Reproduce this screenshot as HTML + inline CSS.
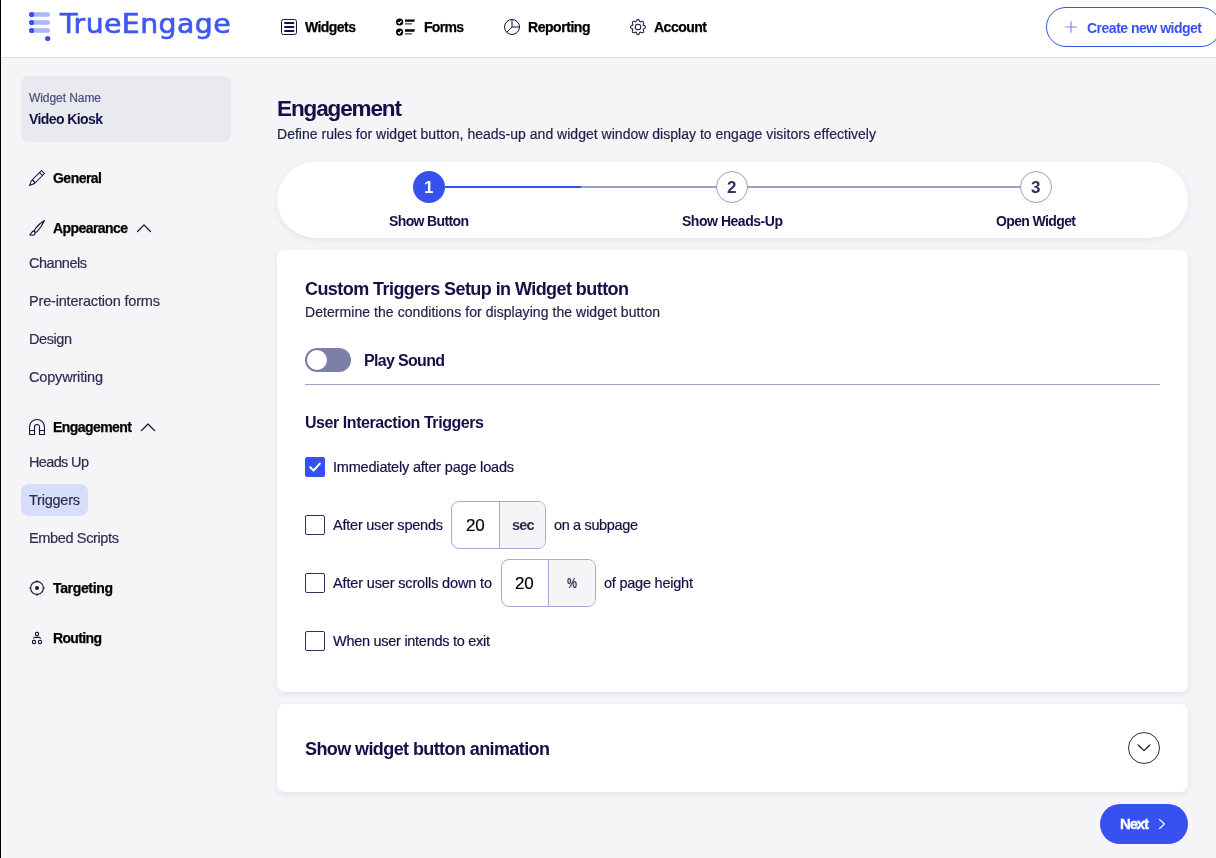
<!DOCTYPE html>
<html lang="en">
<head>
<meta charset="utf-8">
<title>TrueEngage - Engagement Triggers</title>
<style>
*{box-sizing:border-box;margin:0;padding:0}
html,body{width:1216px;height:858px;overflow:hidden;background:#f5f5f8;font-family:"Liberation Sans",sans-serif;color:#14143c}
body{position:relative}
.abs{position:absolute;white-space:nowrap}
.t{position:absolute;white-space:nowrap;line-height:20px;height:20px;will-change:transform}
#edge{left:0;top:0;width:1px;height:858px;background:#000}
#hdr{left:1px;top:0;width:1215px;height:58px;background:#fff;border-bottom:1px solid #dcdcde}
.card{position:absolute;background:#fff;border-radius:8px;box-shadow:0 2px 6px rgba(40,40,100,.09)}
.cb{position:absolute;width:20px;height:20px;border:1px solid #30325a;border-radius:2px;background:#fff}
.ig{position:absolute;width:95px;height:48px;border:1px solid #a8abd0;border-radius:8px;background:#fff;overflow:hidden}
.ig i{position:absolute;left:47px;top:0;width:47px;height:46px;background:#f5f5f8;border-left:1px solid #a8abd0}
svg{position:absolute;overflow:visible}
</style>
</head>
<body>
<div class="abs" id="hdr"></div>
<div class="abs" id="edge"></div>

<!-- logo -->
<svg style="left:28px;top:11px" width="24" height="32" viewBox="0 0 24 32">
  <rect x="1" y="1.2" width="21" height="4.6" rx="2.3" fill="#aab4f7"/>
  <rect x="1" y="9.2" width="21" height="4.6" rx="2.3" fill="#aab4f7"/>
  <rect x="1" y="17.2" width="21" height="4.6" rx="2.3" fill="#aab4f7"/>
  <circle cx="3.6" cy="3.5" r="2.6" fill="#3651f0"/>
  <circle cx="3.6" cy="11.5" r="2.6" fill="#3651f0"/>
  <circle cx="3.6" cy="19.5" r="2.6" fill="#3651f0"/>
  <circle cx="19.7" cy="27.5" r="2.6" fill="#3651f0"/>
</svg>
<div class="abs" id="logo" style="left:59.500px;top:7.500px;font-family:'DejaVu Sans','Liberation Sans',sans-serif;font-size:26.600px;line-height:32px;color:#3d57f2;-webkit-text-stroke:0.650px #3d57f2;letter-spacing:0.400px;will-change:transform;transform:scaleX(1.065);transform-origin:0 0">TrueEngage</div>

<!-- nav icons -->
<svg style="left:281px;top:19px" width="16" height="16" viewBox="0 0 16 16" fill="none" stroke="#14143c"><rect x=".5" y=".5" width="15" height="15" rx="2"/><path d="M4 4H12.500M4 8H12.500M4 12H12.500" stroke-width="1.900" stroke-linecap="round"/></svg>
<svg style="left:395px;top:17px" width="22" height="20" viewBox="0 0 22 20"><circle cx="4.600" cy="5" r="3.600" fill="#000"/><circle cx="4.600" cy="15.100" r="3.600" fill="#000"/><path d="M2.900 5.100l1.300 1.300 2.300-2.600M2.900 15.200l1.300 1.300 2.300-2.600" stroke="#fff" stroke-width="1.200" fill="none"/><path d="M10 2.400h9.900l-.6 2.400H10zM10 12.300h9.900l-.6 2.400H10z" fill="#000"/><path d="M10 6.200h7.200l-.5 1.400H10zM10 16.200h7.200l-.5 1.400H10z" fill="#444"/></svg>
<svg style="left:504px;top:19px" width="16" height="16" viewBox="0 0 16 16" fill="none" stroke="#14143c"><circle cx="8" cy="8" r="7.500"/><path d="M8 .5V8H15.500M8 8L2.700 13.300"/></svg>
<svg style="left:630px;top:19px" width="16" height="16" viewBox="0 0 16 16" fill="#14143c"><path d="M8 4.754a3.246 3.246 0 1 0 0 6.492 3.246 3.246 0 0 0 0-6.492M5.754 8a2.246 2.246 0 1 1 4.492 0 2.246 2.246 0 0 1-4.492 0"/><path d="M9.796 1.343c-.527-1.790-3.065-1.790-3.592 0l-.094.319a.873.873 0 0 1-1.255.520l-.292-.160c-1.640-.892-3.433.902-2.540 2.541l.159.292a.873.873 0 0 1-.520 1.255l-.319.094c-1.790.527-1.790 3.065 0 3.592l.319.094a.873.873 0 0 1 .520 1.255l-.160.292c-.892 1.640.901 3.434 2.541 2.540l.292-.159a.873.873 0 0 1 1.255.520l.094.319c.527 1.790 3.065 1.790 3.592 0l.094-.319a.873.873 0 0 1 1.255-.520l.292.160c1.640.893 3.434-.902 2.540-2.541l-.159-.292a.873.873 0 0 1 .520-1.255l.319-.094c1.790-.527 1.790-3.065 0-3.592l-.319-.094a.873.873 0 0 1-.520-1.255l.160-.292c.893-1.640-.902-3.433-2.541-2.540l-.292.159a.873.873 0 0 1-1.255-.520zm-2.633.283c.246-.835 1.428-.835 1.674 0l.094.319a1.873 1.873 0 0 0 2.693 1.115l.291-.160c.764-.415 1.600.420 1.184 1.185l-.159.292a1.873 1.873 0 0 0 1.116 2.692l.318.094c.835.246.835 1.428 0 1.674l-.319.094a1.873 1.873 0 0 0-1.115 2.693l.160.291c.415.764-.420 1.600-1.185 1.184l-.291-.159a1.873 1.873 0 0 0-2.693 1.116l-.094.318c-.246.835-1.428.835-1.674 0l-.094-.319a1.873 1.873 0 0 0-2.692-1.115l-.292.160c-.764.415-1.600-.420-1.184-1.185l.159-.291A1.873 1.873 0 0 0 1.945 8.930l-.319-.094c-.835-.246-.835-1.428 0-1.674l.319-.094A1.873 1.873 0 0 0 3.060 4.377l-.160-.292c-.415-.764.420-1.600 1.185-1.184l.292.159a1.873 1.873 0 0 0 2.692-1.115z"/></svg>

<!-- sidebar icons -->
<svg style="left:29px;top:170px" width="16" height="16" viewBox="0 0 16 16" fill="#14143c"><path d="M12.146.146a.5.5 0 0 1 .708 0l3 3a.5.5 0 0 1 0 .708l-10 10a.5.5 0 0 1-.168.110l-5 2a.5.5 0 0 1-.650-.650l2-5a.5.5 0 0 1 .110-.168zM11.207 2.500 13.500 4.793 14.793 3.500 12.500 1.207zm1.586 3L10.500 3.207 4 9.707V10h.5a.5.5 0 0 1 .5.5v.5h.5a.5.5 0 0 1 .5.5v.5h.293zm-9.761 5.175-.106.106-1.528 3.821 3.821-1.528.106-.106A.5.5 0 0 1 5 12.500V12h-.5a.5.5 0 0 1-.5-.5V11h-.5a.5.5 0 0 1-.468-.325"/></svg>
<svg style="left:29px;top:220px" width="16" height="16" viewBox="0 0 16 16" fill="none" stroke="#14143c" stroke-width="1.150" stroke-linejoin="round"><path d="M15.400.600C12.500 2.400 8.600 5.800 6.600 8.300 5.900 9.200 5.400 10.500 5.200 11.300L6.200 12.400C7 12.200 8 11.600 8.700 10.800 10.900 8.500 13.900 4 15.400.600Z"/><path d="M5.300 11.500C4.600 11.100 3.600 11.200 3 12.100 2.300 13.100 2.100 13.900 1 14.500 .8 14.600.800 14.800 1 14.900 1.800 15.300 3.600 15.300 4.700 15 5.900 14.700 6.100 13.300 6.100 12.500"/></svg>
<svg style="left:29px;top:419px" width="16" height="16" viewBox="0 0 16 16" fill="none" stroke="#14143c" stroke-width="1.100" stroke-linejoin="round"><path d="M.550 15.450V8A7.450 7.450 0 0 1 15.450 8V15.450H10.500V8A2.500 2.500 0 0 0 5.500 8V15.450ZM.550 11.500H5.500M10.500 11.500H15.450"/></svg>
<svg style="left:29px;top:580px" width="16" height="16" viewBox="0 0 16 16" fill="none" stroke="#14143c"><circle cx="8" cy="8" r="6.400" stroke-width="1.100"/><circle cx="8" cy="8" r="2" fill="#14143c" stroke="none"/><path d="M8 .200V1.800M8 14.200V15.800M.200 8H1.800M14.200 8H15.800" stroke-width="1.100"/></svg>
<svg style="left:31px;top:631px" width="12" height="14" viewBox="0 0 12 14" fill="none" stroke="#14143c" stroke-width="1.100"><rect x="4.400" y="1.400" width="3.200" height="3.200" rx="1.300"/><rect x="1.400" y="9.400" width="3.200" height="3.200" rx="1.300"/><rect x="7.400" y="9.400" width="3.200" height="3.200" rx="1.300"/><path d="M2.600 7.600C2.600 6.600 3 6.400 4 6.400H8C9 6.400 9.400 6.600 9.600 7.600"/></svg>
<!-- chevrons -->
<svg style="left:136px;top:221px" width="16" height="14" viewBox="0 0 16 14" fill="none" stroke="#14143c" stroke-width="1.200" stroke-linecap="round" stroke-linejoin="round"><path d="M1.500 10.500L8 4l6.500 6.500"/></svg>
<svg style="left:140px;top:420px" width="16" height="14" viewBox="0 0 16 14" fill="none" stroke="#14143c" stroke-width="1.200" stroke-linecap="round" stroke-linejoin="round"><path d="M1.500 10.500L8 4l6.500 6.500"/></svg>

<!-- create button -->
<div class="abs" style="left:1046px;top:7px;width:175px;height:40px;border:1px solid #3651f0;border-radius:20px;background:#fff"></div>
<svg style="left:1065px;top:21px" width="12" height="12" viewBox="0 0 12 12"><path d="M6 .200v11.600M.200 6h11.600" stroke="#7686f5" stroke-width="1.150" fill="none"/></svg>

<!-- sidebar -->
<div class="abs" style="left:21px;top:76px;width:210px;height:66px;border-radius:8px;background:#e9e9f0"></div>
<div class="abs" style="left:21px;top:484px;width:67px;height:32px;border-radius:8px;background:#d6defc"></div>

<!-- stepper -->
<div class="abs" style="left:277px;top:162px;width:911px;height:76px;border-radius:38px;background:#fff;box-shadow:0 2px 6px rgba(40,40,100,.09)"></div>
<div class="abs" style="left:444px;top:186px;width:576px;height:2px;background:#9da0c0"></div>
<div class="abs" style="left:444px;top:186px;width:137px;height:2px;background:#3651f0"></div>
<div class="abs" style="left:412.5px;top:171px;width:32px;height:32px;border-radius:50%;background:#3651f0"></div>
<div class="abs" style="left:716px;top:171px;width:32px;height:32px;border-radius:50%;background:#fff;border:1px solid #9da0c0"></div>
<div class="abs" style="left:1019.5px;top:171px;width:32px;height:32px;border-radius:50%;background:#fff;border:1px solid #9da0c0"></div>

<!-- cards -->
<div class="card" style="left:277px;top:250px;width:911px;height:442px"></div>
<div class="card" style="left:277px;top:704px;width:911px;height:88px"></div>

<!-- toggle -->
<div class="abs" style="left:305px;top:348px;width:46px;height:24px;border-radius:12px;background:#7d80a6"></div>
<div class="abs" style="left:307px;top:350px;width:20px;height:20px;border-radius:50%;background:#fff"></div>
<div class="abs" style="left:305px;top:384px;width:855px;height:1px;background:#9da0c0"></div>

<!-- checkboxes -->
<div class="cb" style="left:305px;top:457px;background:#3651f0;border-color:#3651f0"></div>
<svg style="left:305px;top:457px" width="20" height="20" viewBox="0 0 20 20"><path d="M5.200 10.200l3.300 3.300L14.800 6.600" stroke="#fff" stroke-width="2" fill="none" stroke-linecap="round" stroke-linejoin="round"/></svg>
<div class="cb" style="left:305px;top:515px"></div>
<div class="cb" style="left:305px;top:573px"></div>
<div class="cb" style="left:305px;top:631px"></div>

<div class="ig" style="left:451px;top:501px"><i></i></div>
<div class="ig" style="left:501px;top:559px"><i style="left:46px;width:48px"></i></div>

<!-- accordion circle -->
<div class="abs" style="left:1128px;top:732px;width:32px;height:32px;border-radius:50%;border:1px solid #2a2a50"></div>
<svg style="left:1136px;top:740px" width="16" height="16" viewBox="0 0 16 16"><path d="M2.2 5l5.8 5.6L13.8 5" stroke="#14143c" stroke-width="1.2" fill="none" stroke-linecap="round" stroke-linejoin="round"/></svg>

<!-- next -->
<div class="abs" style="left:1100px;top:804px;width:88px;height:40px;border-radius:20px;background:#3651f0"></div>
<svg style="left:1156px;top:817px" width="12" height="14" viewBox="0 0 12 14"><path d="M3.500 2.500L8.500 7l-5 4.500" stroke="#fff" stroke-width="1.050" fill="none" stroke-linecap="round" stroke-linejoin="round"/></svg>

<!-- text -->
<span class="t" id="n1" style="left:305px;top:17px;font-size:14px;font-weight:700;color:#000;letter-spacing:-0.555px;-webkit-text-stroke:0.25px #000">Widgets</span>
<span class="t" id="n2" style="left:424px;top:17px;font-size:14px;font-weight:700;color:#000;letter-spacing:-0.699px;-webkit-text-stroke:0.25px #000">Forms</span>
<span class="t" id="n3" style="left:528px;top:17px;font-size:14px;font-weight:700;color:#000;letter-spacing:-0.451px;-webkit-text-stroke:0.25px #000">Reporting</span>
<span class="t" id="n4" style="left:654px;top:17px;font-size:14px;font-weight:700;color:#000;letter-spacing:-0.500px;-webkit-text-stroke:0.25px #000">Account</span>
<span class="t" id="cnw" style="left:1087px;top:18px;font-size:14px;font-weight:700;color:#3651f0;letter-spacing:-0.495px">Create new widget</span>
<span class="t" id="wn" style="left:29px;top:88px;font-size:12px;font-weight:400;color:#4a4d7a;letter-spacing:-0.070px;-webkit-text-stroke:0.2px #4a4d7a">Widget Name</span>
<span class="t" id="vk" style="left:29px;top:109px;font-size:14px;font-weight:700;color:#121046;letter-spacing:-0.589px">Video Kiosk</span>
<span class="t" id="s1" style="left:53px;top:168px;font-size:14px;font-weight:700;color:#000;letter-spacing:-0.523px;-webkit-text-stroke:0.25px #000">General</span>
<span class="t" id="s2" style="left:53px;top:218px;font-size:14px;font-weight:700;color:#000;letter-spacing:-0.573px;-webkit-text-stroke:0.25px #000">Appearance</span>
<span class="t" id="i1" style="left:29px;top:253px;font-size:14.5px;font-weight:400;color:#2c2e50;letter-spacing:-0.467px;-webkit-text-stroke:0.2px #2c2e50">Channels</span>
<span class="t" id="i2" style="left:29px;top:291px;font-size:14.5px;font-weight:400;color:#2c2e50;letter-spacing:-0.179px;-webkit-text-stroke:0.2px #2c2e50">Pre-interaction forms</span>
<span class="t" id="i3" style="left:29px;top:329px;font-size:14.5px;font-weight:400;color:#2c2e50;letter-spacing:-0.428px;-webkit-text-stroke:0.2px #2c2e50">Design</span>
<span class="t" id="i4" style="left:29px;top:367px;font-size:14.5px;font-weight:400;color:#2c2e50;letter-spacing:-0.175px;-webkit-text-stroke:0.2px #2c2e50">Copywriting</span>
<span class="t" id="s3" style="left:53px;top:417px;font-size:14px;font-weight:700;color:#000;letter-spacing:-0.557px;-webkit-text-stroke:0.25px #000">Engagement</span>
<span class="t" id="i5" style="left:29px;top:452px;font-size:14.5px;font-weight:400;color:#2c2e50;letter-spacing:-0.641px;-webkit-text-stroke:0.2px #2c2e50">Heads Up</span>
<span class="t" id="i6" style="left:29px;top:490px;font-size:14.5px;font-weight:400;color:#2c2e50;letter-spacing:-0.234px;-webkit-text-stroke:0.2px #2c2e50">Triggers</span>
<span class="t" id="i7" style="left:29px;top:528px;font-size:14.5px;font-weight:400;color:#2c2e50;letter-spacing:-0.358px;-webkit-text-stroke:0.2px #2c2e50">Embed Scripts</span>
<span class="t" id="s4" style="left:53px;top:578px;font-size:14px;font-weight:700;color:#000;letter-spacing:-0.344px;-webkit-text-stroke:0.25px #000">Targeting</span>
<span class="t" id="s5" style="left:53px;top:628px;font-size:14px;font-weight:700;color:#000;letter-spacing:-0.646px;-webkit-text-stroke:0.25px #000">Routing</span>
<span class="t" id="h1" style="left:277px;top:99px;font-size:22.5px;font-weight:700;color:#121046;letter-spacing:-1.115px">Engagement</span>
<span class="t" id="sub" style="left:277px;top:124px;font-size:14px;font-weight:400;color:#1e2048;letter-spacing:0.016px;-webkit-text-stroke:0.2px #1e2048">Define rules for widget button, heads-up and widget window display to engage visitors effectively</span>
<span class="t" id="st1" style="left:389px;top:211px;font-size:14px;font-weight:700;color:#121046;letter-spacing:-0.631px">Show Button</span>
<span class="t" id="st2" style="left:682px;top:211px;font-size:14px;font-weight:700;color:#121046;letter-spacing:-0.465px">Show Heads-Up</span>
<span class="t" id="st3" style="left:996px;top:211px;font-size:14px;font-weight:700;color:#121046;letter-spacing:-0.620px">Open Widget</span>
<span class="t" id="c1" style="left:423.8px;top:178px;font-size:17px;font-weight:700;color:#fff">1</span>
<span class="t" id="c2" style="left:727.3px;top:178px;font-size:17px;font-weight:700;color:#2e3060">2</span>
<span class="t" id="c3" style="left:1030.8px;top:178px;font-size:17px;font-weight:700;color:#2e3060">3</span>
<span class="t" id="ct" style="left:305px;top:279px;font-size:18px;font-weight:700;color:#121046;letter-spacing:-0.563px">Custom Triggers Setup in Widget button</span>
<span class="t" id="cs" style="left:305px;top:302px;font-size:14px;font-weight:400;color:#1e2048;letter-spacing:0.058px;-webkit-text-stroke:0.2px #1e2048">Determine the conditions for displaying the widget button</span>
<span class="t" id="ps" style="left:364px;top:351px;font-size:16px;font-weight:700;color:#121046;letter-spacing:-0.681px">Play Sound</span>
<span class="t" id="uit" style="left:305px;top:413px;font-size:16px;font-weight:700;color:#121046;letter-spacing:-0.433px">User Interaction Triggers</span>
<span class="t" id="l1" style="left:333px;top:457px;font-size:14.5px;font-weight:400;color:#121046;letter-spacing:-0.192px;-webkit-text-stroke:0.2px #121046">Immediately after page loads</span>
<span class="t" id="l2" style="left:333px;top:515px;font-size:14.5px;font-weight:400;color:#121046;letter-spacing:-0.229px;-webkit-text-stroke:0.2px #121046">After user spends</span>
<span class="t" id="l2b" style="left:554px;top:515px;font-size:14.5px;font-weight:400;color:#121046;letter-spacing:-0.354px;-webkit-text-stroke:0.2px #121046">on a subpage</span>
<span class="t" id="l3" style="left:333px;top:573px;font-size:14.5px;font-weight:400;color:#121046;letter-spacing:-0.152px;-webkit-text-stroke:0.2px #121046">After user scrolls down to</span>
<span class="t" id="l3b" style="left:604px;top:573px;font-size:14.5px;font-weight:400;color:#121046;letter-spacing:-0.225px;-webkit-text-stroke:0.2px #121046">of page height</span>
<span class="t" id="l4" style="left:333px;top:631px;font-size:14.5px;font-weight:400;color:#121046;letter-spacing:-0.276px;-webkit-text-stroke:0.2px #121046">When user intends to exit</span>
<span class="t" id="v1" style="left:466.3px;top:516px;font-size:17px;font-weight:400;color:#000;letter-spacing:-0.222px;-webkit-text-stroke:0.2px #000">20</span>
<span class="t" id="v2" style="left:515.3px;top:574px;font-size:17px;font-weight:400;color:#000;letter-spacing:-0.222px;-webkit-text-stroke:0.2px #000">20</span>
<span class="t" id="u1" style="left:511.5px;top:515px;font-size:14.5px;font-weight:700;color:#2c2e50;letter-spacing:-0.852px">sec</span>
<span class="t" id="u2" style="left:566.5px;top:573px;font-size:14px;font-weight:700;color:#2c2e50;transform:scaleX(.8);transform-origin:0 50%">%</span>
<span class="t" id="swa" style="left:305px;top:739px;font-size:18px;font-weight:700;color:#121046;letter-spacing:-0.592px">Show widget button animation</span>
<span class="t" id="nx" style="left:1120px;top:814px;font-size:15px;font-weight:700;color:#fff;letter-spacing:-1.172px;-webkit-text-stroke:0.35px #fff">Next</span>
</body>
</html>
